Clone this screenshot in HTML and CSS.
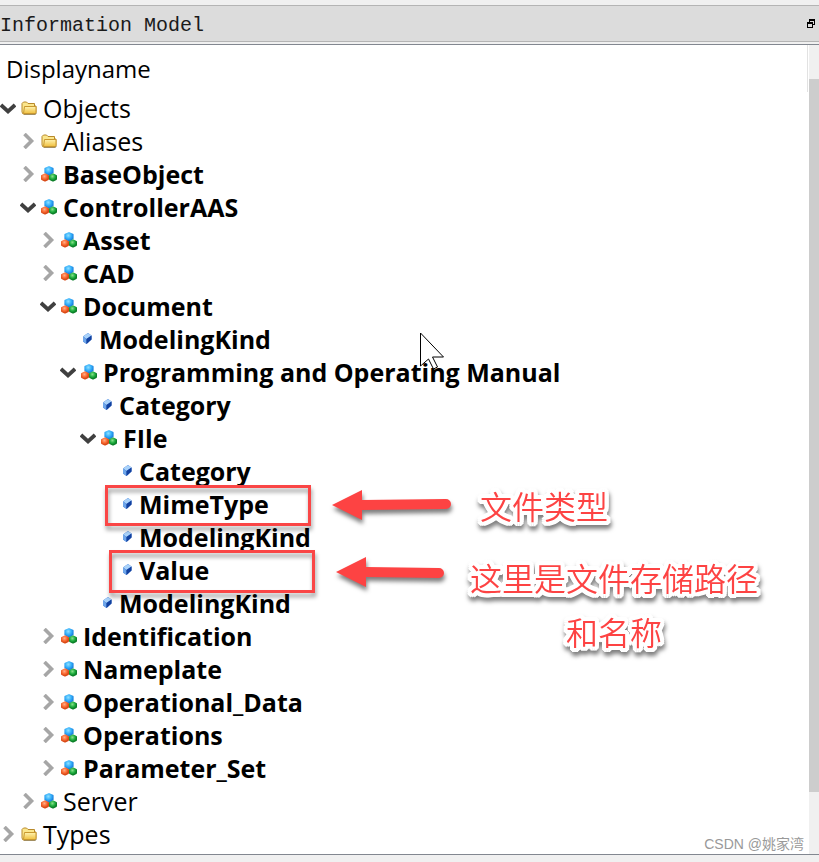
FILE: index.html
```html
<!DOCTYPE html>
<html lang="zh-CN">
<head>
<meta charset="utf-8">
<title>Information Model</title>
<link rel="stylesheet" href="styles.css">
</head>
<body>
<svg class="defs" aria-hidden="true">
  <defs>
    <linearGradient id="gold" x1="0" y1="0" x2="0" y2="1"><stop offset="0" stop-color="#fff3b0"/><stop offset="1" stop-color="#f0c040"/></linearGradient>
    <radialGradient id="blue" cx=".4" cy=".3" r=".7"><stop offset="0" stop-color="#8fe0ff"/><stop offset=".6" stop-color="#35b0fa"/><stop offset="1" stop-color="#1c85e0"/></radialGradient>
    <radialGradient id="orange" cx=".4" cy=".3" r=".7"><stop offset="0" stop-color="#ffb08a"/><stop offset=".6" stop-color="#fa6a32"/><stop offset="1" stop-color="#d84a18"/></radialGradient>
    <radialGradient id="green" cx=".4" cy=".3" r=".7"><stop offset="0" stop-color="#8be08b"/><stop offset=".6" stop-color="#20b040"/><stop offset="1" stop-color="#0c8028"/></radialGradient>
    <symbol id="open" viewBox="0 0 16 16"><path d="M1 5l7 6.500 7-6.500" fill="none" stroke="#404040" stroke-width="3.800"/></symbol>
    <symbol id="closed" viewBox="0 0 16 16"><path d="M4.500 1l7 7-7 7" fill="none" stroke="#a6a6a6" stroke-width="3.600"/></symbol>
    <symbol id="folder" viewBox="0 0 16 16"><path d="M1 12V3.500L2.500 2h3L7 3.500h6.500V6H15v6.500L14 14H2z" fill="#fbe68c" stroke="#b8892b"/><path d="M3.500 6.500h11.500v6l-1 1H2.500z" fill="url(#gold)" stroke="#c9982f"/><path d="M3 14.500h11.500l1-1.500" fill="none" stroke="#7d6a3c" stroke-opacity=".6"/></symbol>
    <symbol id="object" viewBox="0 0 16 16"><path d="M8 1.200l3.600 1.500v3.800L8 8.600 4.400 6.500V2.700z" fill="url(#blue)" stroke="url(#blue)" stroke-width="2" stroke-linejoin="round"/><path d="M4 8.500l3 1.500v3L4 14.600 1 13v-3z" fill="url(#orange)" stroke="url(#orange)" stroke-width="2" stroke-linejoin="round"/><path d="M12 8.500l3 1.500v3l-3 1.600L9 13v-3z" fill="url(#green)" stroke="url(#green)" stroke-width="2" stroke-linejoin="round"/></symbol>
    <symbol id="variable" viewBox="0 0 12 16"><path d="M7 2l3.500 2.500v4L5.500 13 2 10.500v-5z" fill="#2a62c4"/><path d="M7 2l3.500 2.500L5.500 8 2 5.500z" fill="#a9d2fa"/><path d="M2 5.500L5.500 8v5L2 10.500z" fill="#6ea6ea"/><path d="M10.500 4.500v4L5.500 13V8z" fill="#12419f"/></symbol>
  </defs>
</svg>

<section class="dock">
  <header class="dock-title">
    <h1>Information Model</h1>
    <button class="float" aria-label="Float"><svg viewBox="0 0 8 9" shape-rendering="crispEdges"><path d="M2 0h6v6H6V5h1V2H3v1H2z"/><path d="M0 3h6v6H0zM1 5v3h4V5z" fill-rule="evenodd"/></svg></button>
  </header>
  <div class="view">
    <div class="content">
      <h2 class="column">Displayname</h2>
      <ul class="tree">
        <li>
          <div class="row"><button aria-label="Collapse Objects"><svg><use href="#open"/></svg></button><svg class="icon"><use href="#folder"/></svg><span>Objects</span></div>
          <ul>
            <li><div class="row"><button aria-label="Expand Aliases"><svg><use href="#closed"/></svg></button><svg class="icon"><use href="#folder"/></svg><span>Aliases</span></div></li>
            <li><div class="row strong"><button aria-label="Expand BaseObject"><svg><use href="#closed"/></svg></button><svg class="icon"><use href="#object"/></svg><span>BaseObject</span></div></li>
            <li>
              <div class="row strong"><button aria-label="Collapse ControllerAAS"><svg><use href="#open"/></svg></button><svg class="icon"><use href="#object"/></svg><span>ControllerAAS</span></div>
              <ul>
                <li><div class="row strong"><button aria-label="Expand Asset"><svg><use href="#closed"/></svg></button><svg class="icon"><use href="#object"/></svg><span>Asset</span></div></li>
                <li><div class="row strong"><button aria-label="Expand CAD"><svg><use href="#closed"/></svg></button><svg class="icon"><use href="#object"/></svg><span>CAD</span></div></li>
                <li>
                  <div class="row strong"><button aria-label="Collapse Document"><svg><use href="#open"/></svg></button><svg class="icon"><use href="#object"/></svg><span>Document</span></div>
                  <ul>
                    <li><div class="row strong leaf"><svg class="icon"><use href="#variable"/></svg><span>ModelingKind</span></div></li>
                    <li>
                      <div class="row strong"><button aria-label="Collapse Programming and Operating Manual"><svg><use href="#open"/></svg></button><svg class="icon"><use href="#object"/></svg><span>Programming and Operating Manual</span></div>
                      <ul>
                        <li><div class="row strong leaf"><svg class="icon"><use href="#variable"/></svg><span>Category</span></div></li>
                        <li>
                          <div class="row strong"><button aria-label="Collapse FIle"><svg><use href="#open"/></svg></button><svg class="icon"><use href="#object"/></svg><span>FIle</span></div>
                          <ul>
                            <li><div class="row strong leaf"><svg class="icon"><use href="#variable"/></svg><span>Category</span></div></li>
                            <li><div class="row strong leaf"><svg class="icon"><use href="#variable"/></svg><span>MimeType</span></div></li>
                            <li><div class="row strong leaf"><svg class="icon"><use href="#variable"/></svg><span>ModelingKind</span></div></li>
                            <li><div class="row strong leaf"><svg class="icon"><use href="#variable"/></svg><span>Value</span></div></li>
                          </ul>
                        </li>
                        <li><div class="row strong leaf"><svg class="icon"><use href="#variable"/></svg><span>ModelingKind</span></div></li>
                      </ul>
                    </li>
                  </ul>
                </li>
                <li><div class="row strong"><button aria-label="Expand Identification"><svg><use href="#closed"/></svg></button><svg class="icon"><use href="#object"/></svg><span>Identification</span></div></li>
                <li><div class="row strong"><button aria-label="Expand Nameplate"><svg><use href="#closed"/></svg></button><svg class="icon"><use href="#object"/></svg><span>Nameplate</span></div></li>
                <li><div class="row strong"><button aria-label="Expand Operational_Data"><svg><use href="#closed"/></svg></button><svg class="icon"><use href="#object"/></svg><span>Operational_Data</span></div></li>
                <li><div class="row strong"><button aria-label="Expand Operations"><svg><use href="#closed"/></svg></button><svg class="icon"><use href="#object"/></svg><span>Operations</span></div></li>
                <li><div class="row strong"><button aria-label="Expand Parameter_Set"><svg><use href="#closed"/></svg></button><svg class="icon"><use href="#object"/></svg><span>Parameter_Set</span></div></li>
              </ul>
            </li>
            <li><div class="row"><button aria-label="Expand Server"><svg><use href="#closed"/></svg></button><svg class="icon"><use href="#object"/></svg><span>Server</span></div></li>
          </ul>
        </li>
        <li><div class="row"><button aria-label="Expand Types"><svg><use href="#closed"/></svg></button><svg class="icon"><use href="#folder"/></svg><span>Types</span></div></li>
      </ul>
    </div>
    <div class="scrollbar"><div class="thumb"></div></div>

    <div class="mark mark-type"></div>
    <div class="mark mark-value"></div>
    <svg class="arrow arrow-type" viewBox="0 0 120 32"><path d="M0 16L30 1v10l84-1a5 5 0 0 1 0 10l-84 1v10z"/></svg>
    <svg class="arrow arrow-value" viewBox="0 0 120 32"><path d="M0 15L30 0v10l73 1a5 5 0 0 1 0 10l-73-1v10z"/></svg>
    <p class="note note-type">文件类型</p>
    <p class="note note-value">这里是文件存储路径<br>和名称</p>
    <svg class="cursor" viewBox="0 0 26 40"><path d="M1.500 1v33l8-7 5 10 4-2-5-10h11z" fill="#fff" fill-opacity=".7" stroke="#000"/></svg>
    <p class="watermark">CSDN @姚家湾</p>
  </div>
</section>
</body>
</html>
```
FILE: styles.css
```css
* { box-sizing: border-box; }

body {
  margin: 0;
  background: #f0f0f0;
  color: #000;
  font-family: "Open Sans", "Noto Sans", "Noto Sans CJK SC", sans-serif;
}

h1, h2, p, ul { margin: 0; padding: 0; font-weight: 400; }
ul { list-style: none; }
button { padding: 0; border: 0; background: none; }
svg { display: block; }

.defs { position: absolute; width: 0; height: 0; }

.dock {
  display: flex;
  flex-direction: column;
  min-height: 100vh;
  padding: 5px 0 7px;
}

.dock-title {
  display: flex;
  align-items: center;
  justify-content: space-between;
  height: 37px;
  margin-bottom: 2px;
  padding-right: 4px;
  border: solid #b4b4b4;
  border-width: 1px 0;
  background: #dcdcdc;
}

.dock-title h1 {
  padding-top: 4px;
  font: 20px/31px "Liberation Mono", monospace;
  color: #1a1a1a;
}

.float svg { width: 8px; height: 9px; }

.view {
  position: relative;
  display: flex;
  flex: 1;
  border: solid #828790;
  border-width: 1px 0;
  background: #fff;
}

.content { flex: 1; }

.column {
  height: 47px;
  margin-right: 1px;
  padding-left: 6px;
  border-right: 1px solid #e2e2e2;
  font-size: 24px;
  line-height: 47px;
}

.tree ul { padding-left: 20px; }

.row {
  display: flex;
  align-items: center;
  gap: 5px;
  height: 33px;
  font-size: 25px;
  line-height: 33px;
  white-space: nowrap;
}

.row svg { width: 16px; height: 16px; margin-bottom: 2px; }
.row span { padding-left: 1px; }
.strong { font-weight: 700; }
.leaf { padding-left: 21px; }
.row.leaf .icon { width: 12px; }

.scrollbar {
  width: 10px;
  padding-top: 34px;
  background: #f0f0f0;
}

.thumb { height: 92%; background: #cdcdcd; }

.mark {
  position: absolute;
  width: 206px;
  border: 3px solid #fa4646;
  filter: drop-shadow(1px 4px 2px rgba(0, 0, 0, .4));
}

.mark-type { left: 105px; top: 440px; height: 41px; }
.mark-value { left: 109px; top: 505px; height: 43px; }

.arrow {
  position: absolute;
  width: 120px;
  height: 32px;
  overflow: visible;
  fill: #fd4343;
  filter: drop-shadow(1px 4px 2px rgba(0, 0, 0, .5));
}

.arrow-type { left: 332px; top: 444px; }
.arrow-value { left: 336px; top: 512px; }

.note {
  position: absolute;
  color: #fd4343;
  font: 400 32px/54px "Noto Sans CJK SC", sans-serif;
  font-weight: 350;
  text-align: center;
  white-space: nowrap;
  text-shadow:
    4px 0 #fff, 4px 2px #fff, 3px 3px #fff, 2px 4px #fff,
    0 4px #fff, -2px 4px #fff, -3px 3px #fff, -4px 2px #fff,
    -4px 0 #fff, -4px -2px #fff, -3px -3px #fff, -2px -4px #fff,
    0 -4px #fff, 2px -4px #fff, 3px -3px #fff, 4px -2px #fff,
    2px 0 #fff, -2px 0 #fff, 0 2px #fff, 0 -2px #fff;
  filter: drop-shadow(1px 4px 2px rgba(0, 0, 0, .5));
}

.note-type { left: 480px; top: 433px; }
.note-value { left: 470px; top: 505px; }

.cursor {
  position: absolute;
  left: 419px;
  top: 287px;
  width: 26px;
  height: 40px;
}

.watermark {
  position: absolute;
  right: 15px;
  bottom: 0;
  color: #999;
  font: 14px/20px "Liberation Sans", "Noto Sans CJK SC", sans-serif;
}
```
